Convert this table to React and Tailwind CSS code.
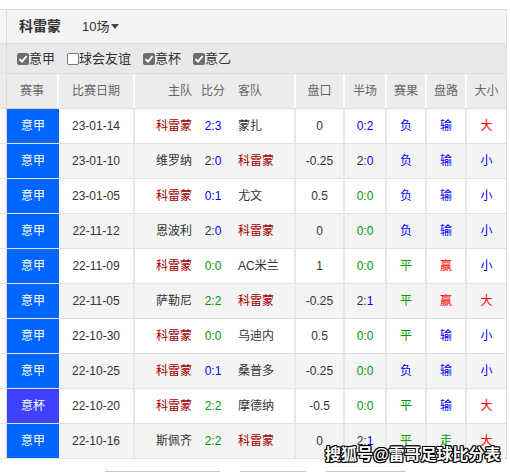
import React from 'react';

const RED = 'text-[#a50000]';
const BLUE = 'text-[#0000ff]';
const GREEN = 'text-[#009900]';

const rows = [
  { lg: '意甲', d: '23-01-14', h: '科雷蒙', s: [['2:3', BLUE]], a: '蒙扎', hk: 'home', pk: '0', ht: [['0:2', BLUE]], r: '负', p: '输', ou: '大' },
  { lg: '意甲', d: '23-01-10', h: '维罗纳', s: [['2:', ''], ['0', BLUE]], a: '科雷蒙', hk: 'away', pk: '-0.25', ht: [['2:', ''], ['0', BLUE]], r: '负', p: '输', ou: '小' },
  { lg: '意甲', d: '23-01-05', h: '科雷蒙', s: [['0:1', BLUE]], a: '尤文', hk: 'home', pk: '0.5', ht: [['0:0', GREEN]], r: '负', p: '输', ou: '小' },
  { lg: '意甲', d: '22-11-12', h: '恩波利', s: [['2:', ''], ['0', BLUE]], a: '科雷蒙', hk: 'away', pk: '0', ht: [['0:0', GREEN]], r: '负', p: '输', ou: '小' },
  { lg: '意甲', d: '22-11-09', h: '科雷蒙', s: [['0:0', GREEN]], a: 'AC米兰', hk: 'home', pk: '1', ht: [['0:0', GREEN]], r: '平', p: '赢', ou: '小' },
  { lg: '意甲', d: '22-11-05', h: '萨勒尼', s: [['2:2', GREEN]], a: '科雷蒙', hk: 'away', pk: '-0.25', ht: [['2:', ''], ['1', BLUE]], r: '平', p: '赢', ou: '大' },
  { lg: '意甲', d: '22-10-30', h: '科雷蒙', s: [['0:0', GREEN]], a: '乌迪内', hk: 'home', pk: '0.5', ht: [['0:0', GREEN]], r: '平', p: '输', ou: '小' },
  { lg: '意甲', d: '22-10-25', h: '科雷蒙', s: [['0:1', BLUE]], a: '桑普多', hk: 'home', pk: '-0.25', ht: [['0:0', GREEN]], r: '负', p: '输', ou: '小' },
  { lg: '意杯', d: '22-10-20', h: '科雷蒙', s: [['2:2', GREEN]], a: '摩德纳', hk: 'home', pk: '-0.5', ht: [['0:0', GREEN]], r: '平', p: '输', ou: '大' },
  { lg: '意甲', d: '22-10-16', h: '斯佩齐', s: [['2:2', GREEN]], a: '科雷蒙', hk: 'away', pk: '0', ht: [['2:', ''], ['1', BLUE]], r: '平', p: '走', ou: '大' },
];

const colorOf = {
  负: BLUE, 平: GREEN, 胜: 'text-[#ff0000]',
  输: BLUE, 赢: 'text-[#ff0000]', 走: GREEN,
  大: 'text-[#ff0000]', 小: BLUE,
};

function Box({ checked, label }) {
  return (
    <label className="flex items-center">
      {checked ? (
        <span className="flex h-[12px] w-[12px] items-center justify-center rounded-[2px] bg-[#6e6e6e]">
          <svg width="10" height="10" viewBox="0 0 10 10">
            <path d="M1.5 5.2 L4 7.6 L8.6 2.2" stroke="#fff" strokeWidth="1.8" fill="none" />
          </svg>
        </span>
      ) : (
        <span className="h-[12px] w-[12px] rounded-[2px] border border-[#777] bg-white" />
      )}
      <span>{label}</span>
    </label>
  );
}

function Parts({ parts }) {
  return parts.map(([t, c], i) => (
    <span key={i} className={c}>{t}</span>
  ));
}

export default function App() {
  return (
    <div
      className="relative h-[472px] w-[510px] overflow-hidden bg-white text-[12px] text-[#333]"
      style={{ fontFamily: '"Liberation Sans", "Noto Sans CJK SC", sans-serif' }}
    >
      <div className="h-[9px]" />
      <div className="w-[507px] border-r border-t border-[#dcdcdc]">
        <div className="flex h-[34px] items-center border-b border-[#e0e0e0] bg-[#f4f4f4]">
          <div className="h-full w-[7px] border-r border-[#dcdcdc]" />
          <span className="ml-[12px] text-[14px] font-bold text-[#333]">科雷蒙</span>
          <span className="ml-[21px] flex items-center text-[13px] text-[#333]">
            10场
            <svg width="8" height="5" viewBox="0 0 8 5" className="ml-[2px]">
              <path d="M0 0 H8 L4 5 Z" fill="#444" />
            </svg>
          </span>
        </div>
        <div className="flex h-[30px] items-center border-b border-[#e0e0e0] bg-[#e9e9e9] text-[13px]">
          <div className="h-full w-[7px] border-r border-[#dcdcdc]" />
          <div className="ml-[10px] flex items-center gap-[12px]">
            <Box checked label="意甲" />
            <Box label="球会友谊" />
            <Box checked label="意杯" />
            <Box checked label="意乙" />
          </div>
        </div>
        <div className="flex h-[35px] items-center border-b border-[#dcdcdc] bg-[#ececec] text-[#666]">
          <div className="h-full w-[7px] border-r border-[#dcdcdc]" />
          <div className="flex h-full w-[52px] items-center justify-center border-r-2 border-white">赛事</div>
          <div className="flex h-full w-[76px] items-center justify-center border-r-2 border-white">比赛日期</div>
          <div className="flex h-full w-[161px] items-center border-r-2 border-white">
            <span className="w-[57px] text-right">主队</span>
            <span className="w-[42px] text-center">比分</span>
            <span className="pl-[4px]">客队</span>
          </div>
          <div className="flex h-full w-[49px] items-center justify-center border-r-2 border-white">盘口</div>
          <div className="flex h-full w-[42px] items-center justify-center border-r-2 border-white">半场</div>
          <div className="flex h-full w-[40px] items-center justify-center border-r-2 border-white">赛果</div>
          <div className="flex h-full w-[40px] items-center justify-center border-r-2 border-white">盘路</div>
          <div className="flex h-full flex-1 items-center justify-center">大小</div>
        </div>
        {rows.map((r, i) => (
          <div
            key={i}
            className={`flex h-[35px] items-center border-b border-[#e0e0e0] ${i % 2 ? 'bg-[#f4f4f4]' : 'bg-white'}`}
          >
            <div className="h-full w-[7px] border-r border-[#dcdcdc] bg-white" />
            <div
              className={`flex h-full w-[52px] items-center justify-center text-white ${r.lg === '意杯' ? 'bg-[#4040ff]' : 'bg-[#0066ff]'}`}
            >
              {r.lg}
            </div>
            <div className="flex h-full w-[76px] items-center justify-center border-r-2 border-[#e8e8e8]">{r.d}</div>
            <div className="flex h-full w-[161px] items-center border-r-2 border-[#e8e8e8]">
              <span className={`w-[57px] text-right ${r.hk === 'home' ? RED : ''}`}>{r.h}</span>
              <span className="w-[42px] text-center"><Parts parts={r.s} /></span>
              <span className={`pl-[4px] ${r.hk === 'away' ? RED : ''}`}>{r.a}</span>
            </div>
            <div className="flex h-full w-[49px] items-center justify-center border-r-2 border-[#e8e8e8]">{r.pk}</div>
            <div className="flex h-full w-[42px] items-center justify-center border-r-2 border-[#e8e8e8]"><Parts parts={r.ht} /></div>
            <div className={`flex h-full w-[40px] items-center justify-center border-r-2 border-[#e8e8e8] ${colorOf[r.r]}`}>{r.r}</div>
            <div className={`flex h-full w-[40px] items-center justify-center border-r-2 border-[#e8e8e8] ${colorOf[r.p]}`}>{r.p}</div>
            <div className={`flex h-full flex-1 items-center justify-center ${colorOf[r.ou]}`}>{r.ou}</div>
          </div>
        ))}
      </div>
      <div className="mt-[12px] flex text-[13px] leading-[16px] text-[#333]">
        <span className="ml-[105px] w-[115px] bg-[#c8c8c8]">科雷蒙近10场战绩</span>
        <span className="ml-[20px] w-[66px] bg-[#c8c8c8]">0胜5平5负</span>
        <span className="ml-[20px] w-[80px] bg-[#c8c8c8]">赢率20% 走1</span>
      </div>
      <div
        className="absolute left-[325px] top-[443px] text-[16px] font-bold text-white"
        style={{
          textShadow:
            '1px 0 0 #000, -1px 0 0 #000, 0 1px 0 #000, 0 -1px 0 #000, 1px 1px 0 #000, -1px -1px 0 #000, 1px -1px 0 #000, -1px 1px 0 #000',
        }}
      >
        搜狐号@雷哥足球比分表
      </div>
    </div>
  );
}
